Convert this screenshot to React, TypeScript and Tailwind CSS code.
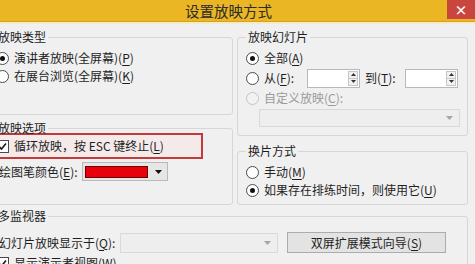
import React from "react";

// 复选/单选等小控件，照 Win8 对话框的样子画
function Radio({ checked = false, disabled = false }: { checked?: boolean; disabled?: boolean }) {
  return (
    <span
      className={`flex h-[13px] w-[13px] shrink-0 items-center justify-center rounded-full border ${
        disabled ? "border-[#c4c4c4] bg-[#f2f2f2]" : "border-[#4a4a4a] bg-white"
      }`}
    >
      {checked && <span className="h-[5px] w-[5px] rounded-full bg-[#111]" />}
    </span>
  );
}

function Check() {
  return (
    <span className="flex h-[13px] w-[13px] shrink-0 items-center justify-center border border-[#4a4a4a] bg-white">
      <svg width="9" height="9" viewBox="0 0 9 9">
        <path d="M1 4.5 L3.5 7 L8 1.5" fill="none" stroke="#1a1a1a" strokeWidth="1.6" />
      </svg>
    </span>
  );
}

function Key({ k }: { k: string }) {
  return <span className="underline underline-offset-[2px]">{k}</span>;
}

function Group({
  title,
  className,
  children,
}: {
  title: string;
  className: string;
  children: React.ReactNode;
}) {
  return (
    <fieldset className={`rounded-[3px] border border-[#d6d6d6] ${className}`}>
      <legend className="ml-[8px] px-[2px] text-[12px] leading-[16px] text-[#1e1e1e]">{title}</legend>
      {children}
    </fieldset>
  );
}

function Spinner() {
  return (
    <div className="flex h-[19px] w-[53px] border border-[#b5b8bf] bg-white">
      <div className="flex-1" />
      <div className="my-[1px] mr-[1px] flex w-[10px] flex-col border border-[#c6c6c6] bg-[#f1f1f1]">
        <div className="flex flex-1 items-center justify-center border-b border-[#c6c6c6]">
          <svg width="5" height="3" viewBox="0 0 5 3">
            <path d="M0 3 L2.5 0 L5 3 Z" fill="#333" />
          </svg>
        </div>
        <div className="flex flex-1 items-center justify-center">
          <svg width="5" height="3" viewBox="0 0 5 3">
            <path d="M0 0 L2.5 3 L5 0 Z" fill="#333" />
          </svg>
        </div>
      </div>
    </div>
  );
}

function Arrow({ color }: { color: string }) {
  return (
    <svg width="7" height="4" viewBox="0 0 7 4">
      <path d="M0 0 L3.5 4 L7 0 Z" fill={color} />
    </svg>
  );
}

export default function App() {
  return (
    <div className="h-[264px] w-[475px] overflow-hidden bg-[#f0f0f0] font-['Noto_Sans_CJK_SC','Liberation_Sans',sans-serif] text-[12px] leading-[16px] text-[#1e1e1e]">
      {/* 标题栏 */}
      <div className="flex h-[21px] bg-[#eab623]">
        <div className="flex-1 pl-[10px] text-center text-[14.5px] leading-[21px] text-[#2b2b2b]">设置放映方式</div>
        <div className="flex h-[19px] w-[28px] items-center justify-center bg-[#c8463e] text-[13px] font-bold leading-none text-white">
          ×
        </div>
      </div>
      <div className="h-[1px] bg-[#d6a21e]" />
      <div className="h-[2px] bg-[#f6ebc6]" />

      <div className="ml-[-13px] pt-[5px]">
        <div className="flex gap-[4px]">
          {/* 左列 */}
          <div className="flex w-[246px] flex-col gap-[5px]">
            <Group title="放映类型" className="h-[86px]">
              <div className="pl-[8px] pt-[4px]">
                <div className="flex h-[18px] items-center gap-[5px]">
                  <Radio checked />
                  <span>
                    演讲者放映(全屏幕)(<Key k="P" />)
                  </span>
                </div>
                <div className="flex h-[18px] items-center gap-[5px]">
                  <Radio />
                  <span>
                    在展台浏览(全屏幕)(<Key k="K" />)
                  </span>
                </div>
              </div>
            </Group>
            <Group title="放映选项" className="h-[85px]">
              <div className="ml-[4px] mt-[-3px] flex h-[26px] w-[211px] items-center gap-[5px] border-2 border-[#c23b3b] bg-[#f5eaea] pl-[2px]">
                <Check />
                <span>
                  循环放映，按 ESC 键终止(<Key k="L" />)
                </span>
              </div>
              <div className="mt-[3px] flex h-[19px] items-center pl-[11px]">
                <span className="w-[83px] shrink-0">
                  绘图笔颜色(<Key k="E" />):
                </span>
                <div className="flex h-[19px] w-[86px] items-center border border-[#b9b9b9] bg-[#e6e6e6]">
                  <div className="ml-[2px] h-[12px] w-[63px] border border-[#6b0000] bg-[#e8000b]" />
                  <div className="flex flex-1 justify-center pl-[2px]">
                    <Arrow color="#111" />
                  </div>
                </div>
              </div>
            </Group>
          </div>

          {/* 右列 */}
          <div className="flex w-[231px] flex-col gap-[7px]">
            <Group title="放映幻灯片" className="h-[107px]">
              <div className="pl-[8px] pt-[4px]">
                <div className="flex h-[18px] items-center gap-[5px]">
                  <Radio checked />
                  <span>
                    全部(<Key k="A" />)
                  </span>
                </div>
                <div className="mt-[1px] flex h-[20px] items-center">
                  <Radio />
                  <span className="ml-[5px] w-[43px] shrink-0">
                    从(<Key k="F" />):
                  </span>
                  <Spinner />
                  <span className="ml-[5px] w-[40px] shrink-0">
                    到(<Key k="T" />):
                  </span>
                  <Spinner />
                </div>
                <div className="mt-[1px] flex h-[18px] items-center gap-[5px] text-[#9a9a9a]">
                  <Radio disabled />
                  <span>
                    自定义放映(<Key k="C" />):
                  </span>
                </div>
                <div className="ml-[13px] mt-[2px] flex h-[18px] w-[201px] items-center justify-end border border-[#d9d9d9] bg-[#eeeeee] pr-[6px]">
                  <Arrow color="#a6a6a6" />
                </div>
              </div>
            </Group>
            <Group title="换片方式" className="h-[62px]">
              <div className="pl-[8px] pt-[4px]">
                <div className="flex h-[18px] items-center gap-[5px]">
                  <Radio />
                  <span>
                    手动(<Key k="M" />)
                  </span>
                </div>
                <div className="flex h-[18px] items-center gap-[5px]">
                  <Radio checked />
                  <span>
                    如果存在排练时间，则使用它(<Key k="U" />)
                  </span>
                </div>
              </div>
            </Group>
          </div>
        </div>

        {/* 多监视器 */}
        <Group title="多监视器" className="mt-[3px] h-[80px] w-[481px]">
          <div className="mt-[8px] flex h-[21px] items-center pl-[11px]">
            <span className="w-[121px] shrink-0">
              幻灯片放映显示于(<Key k="Q" />):
            </span>
            <div className="flex h-[20px] w-[158px] items-center justify-end border border-[#d9d9d9] bg-[#eeeeee] pr-[6px]">
              <Arrow color="#a6a6a6" />
            </div>
            <div className="ml-[9px] flex h-[21px] w-[159px] items-center justify-center border border-[#acacac] bg-[#e3e3e3]">
              双屏扩展模式向导(<Key k="S" />)
            </div>
          </div>
          <div className="mt-[1px] flex h-[18px] items-center gap-[5px] pl-[8px]">
            <Check />
            <span>
              显示演示者视图(<Key k="W" />)
            </span>
          </div>
        </Group>
      </div>
    </div>
  );
}
